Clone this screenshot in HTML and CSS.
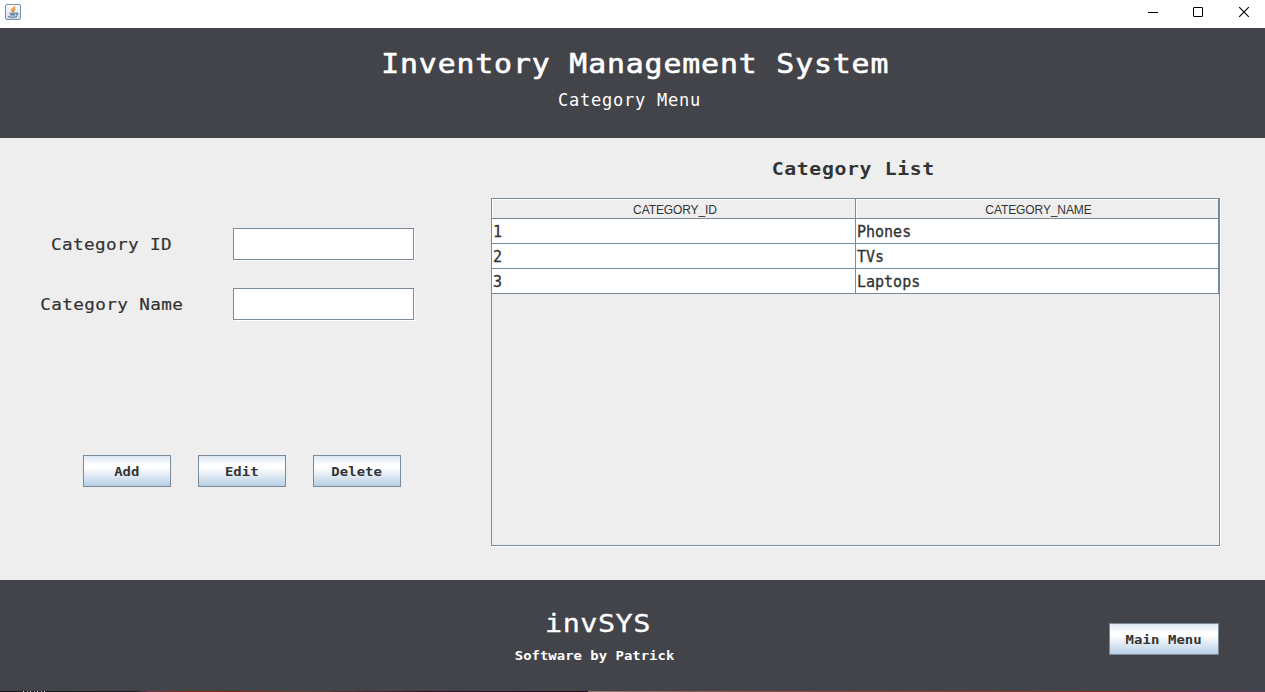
FILE: index.html
```html
<!DOCTYPE html>
<html lang="en">
<head>
<meta charset="utf-8">
<title>Inventory Management System</title>
<link rel="stylesheet" href="styles.css">
</head>
<body>
<div class="window">
  <div class="titlebar">
    <svg class="java" width="16" height="16" viewBox="0 0 16 16" fill="none">
      <defs><linearGradient id="ib" x1="0" y1="0" x2="0" y2="1"><stop offset="0" stop-color="#ffffff"/><stop offset="1" stop-color="#d3dce4"/></linearGradient></defs>
      <rect x=".5" y=".5" width="15" height="15" rx="1.5" fill="url(#ib)" stroke="#7590a8"/>
      <path d="M9.700 2.200C10.200 4 6.300 4.500 6.800 6.300C7 7.200 8 7.700 7.900 8.600M10.300 5C8.600 5.700 8.500 6.600 9.200 7.500" stroke="#e8892b" stroke-width="1.500"/>
      <path d="M4.500 9.200H10.800M5.200 10.900H10.200M11 9C13.800 8.600 13.200 11 10.900 11.300M3.300 12.600C5 13.500 10 13.500 12 12.500" stroke="#456f98" stroke-width="1.100"/>
    </svg>
    <svg class="controls" width="104" height="12" viewBox="0 0 104 12" fill="none" stroke="#000">
      <path d="M1 6.500H11"/><rect x="46.500" y="1.500" width="9" height="9" rx=".5"/><path d="M92.200 1.200L101.800 10.800M101.800 1.200L92.200 10.800" stroke-width="1.100"/>
    </svg>
  </div>
  <header class="header">
    <h1 class="title">Inventory Management System</h1>
    <p class="subtitle">Category Menu</p>
  </header>
  <main class="main">
    <section class="form">
      <div class="row"><label class="label" for="cid"><span class="wide">Category ID</span></label><input class="field" id="cid"></div>
      <div class="row"><label class="label" for="cname"><span class="wide">Category Name</span></label><input class="field" id="cname"></div>
      <div class="actions"><button class="btn"><span class="wide">Add</span></button><button class="btn"><span class="wide">Edit</span></button><button class="btn"><span class="wide">Delete</span></button></div>
    </section>
    <section class="list">
      <h2 class="heading"><span class="wide">Category List</span></h2>
      <div class="scroll">
        <div class="grid">
          <div class="th">CATEGORY_ID</div><div class="th">CATEGORY_NAME</div>
          <div class="td">1</div><div class="td">Phones</div>
          <div class="td">2</div><div class="td">TVs</div>
          <div class="td">3</div><div class="td">Laptops</div>
        </div>
      </div>
    </section>
  </main>
  <footer class="footer">
    <div class="brand"><div class="logo">invSYS</div><div class="credit"><span class="wide">Software by Patrick</span></div></div>
    <button class="btn menu"><span class="wide">Main Menu</span></button>
  </footer>
  <div class="desktop"></div>
</div>
</body>
</html>
```
FILE: styles.css
```css
* { box-sizing: border-box; }
body { margin: 0; font-family: "DejaVu Sans Mono", monospace; color: #333; overflow: hidden; }
h1, h2, p { margin: 0; }
.wide { display: inline-block; transform: scaleX(1.07); }
.window { width: 1265px; height: 692px; display: flex; flex-direction: column; background: #eee; }
.titlebar { height: 28px; flex: none; background: #fff; display: flex; justify-content: space-between; padding: 4px 14px 0 5px; }
.controls { margin-top: 2px; }
.header { height: 110px; flex: none; background: #434449; color: #fff; display: flex; flex-direction: column; align-items: center; padding-top: 19px; }
.title { font-size: 26px; line-height: 34px; font-weight: 400; letter-spacing: .78px; -webkit-text-stroke: .6px #fff; white-space: pre; padding-left: 5px; transform: scaleX(1.145); }
.subtitle { font-size: 17px; line-height: 20px; letter-spacing: .75px; margin-top: 9px; padding-right: 6px; }
.main { height: 442px; flex: none; display: flex; }
.form { width: 491px; padding-top: 90px; }
.row { display: flex; height: 32px; margin-bottom: 28px; }
.label { width: 223px; margin-right: 10px; text-align: center; font-size: 16.500px; line-height: 33px; letter-spacing: .35px; -webkit-text-stroke: .2px #333; }
.field { width: 181px; height: 32px; padding: 4px; border: 1px solid #7a8a99; border-radius: 0; background: #fff; box-shadow: 1px 1px 0 #fff; outline: none; }
.actions { display: flex; gap: 27px; padding: 107px 0 0 83px; }
.btn { width: 88px; height: 32px; padding: 2px 0 0; border: 1px solid #7a8a99; border-radius: 0; background: linear-gradient(#dde8f3 0%, #fff 30%, #fff 38%, #b8cfe5 100%); color: #333; font: bold 13px/28px "DejaVu Sans Mono", monospace; letter-spacing: .05px; }
.list { width: 729px; padding-top: 18px; }
.heading { height: 42px; text-align: center; font-size: 18.500px; line-height: 26px; letter-spacing: .6px; padding-right: 5px; }
.scroll { height: 348px; border: 1px solid #7a8a99; box-shadow: 1px 1px 0 #fff; }
.grid { display: grid; grid-template-columns: 364px 363px; grid-template-rows: 20px 25px 25px 25px; }
.th, .td { border-right: 1px solid #7a8a99; border-bottom: 1px solid #7a8a99; }
.th { background: #eee; box-shadow: inset 1px 1px 0 #fff; text-align: center; font: 12px/22px "Liberation Sans", Arial, sans-serif; padding-left: 3px; letter-spacing: -.1px; }
.td { background: #fff; padding-left: 1px; font-size: 15px; line-height: 26px; -webkit-text-stroke: .3px #333; }
.footer { height: 111px; flex: none; background: #434449; color: #fff; display: flex; padding-right: 46px; justify-content: space-between; }
.brand { width: 189px; margin-left: 500px; padding-top: 27px; text-align: center; }
.logo { font-size: 25px; line-height: 34px; letter-spacing: .4px; -webkit-text-stroke: .3px #fff; padding-left: 6px; transform: scaleX(1.14); }
.credit { font-size: 13px; font-weight: 700; line-height: 20px; letter-spacing: .02px; margin-top: 5px; white-space: nowrap; }
.menu { width: 110px; margin-top: 43px; letter-spacing: .1px; }
.desktop { height: 1px; flex: none; background: repeating-linear-gradient(90deg, #ddd 0 1px, #17131a 1px 4px, #9ab 4px 5px, #17131a 5px 7px) 23px 0 / 25px 1px no-repeat, linear-gradient(90deg, #17131a 0, #201820 135px, #76384b 150px, #8b2418 190px, #842216 235px, #624038 300px, #311022 430px, #260a20 588px, #8f7772 588px, #8b5147 760px, #8b2b20 1110px, #642b5b 1210px, #553f58 1265px); }
```
